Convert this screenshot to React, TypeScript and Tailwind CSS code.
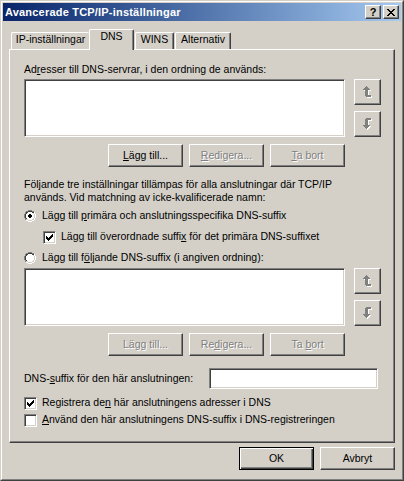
import React from 'react';

type PixMap = Record<string, string>;

function Pixels({ rows, colors, className }: { rows: string[]; colors: PixMap; className?: string }) {
  const w = Math.max(...rows.map((r) => r.length));
  const h = rows.length;
  const rects: React.ReactElement[] = [];
  rows.forEach((r, y) => {
    for (let x = 0; x < r.length; x++) {
      const c = colors[r[x]];
      if (c) rects.push(<rect key={`${x}-${y}`} x={x} y={y} width={1} height={1} fill={c} />);
    }
  });
  return (
    <svg width={w} height={h} viewBox={`0 0 ${w} ${h}`} shapeRendering="crispEdges" className={className}>
      {rects}
    </svg>
  );
}

function withShadow(mask: string[]): string[] {
  const h = mask.length + 1;
  const w = mask[0].length + 1;
  const out: string[] = [];
  for (let y = 0; y < h; y++) {
    let row = '';
    for (let x = 0; x < w; x++) {
      const on = mask[y]?.[x] === 'X';
      const sh = mask[y - 1]?.[x - 1] === 'X';
      row += on ? 'G' : sh ? 'W' : '.';
    }
    out.push(row);
  }
  return out;
}

const UP_MASK = [
  '...X.....',
  '..XXX....',
  '.XXXXX...',
  'XXXXXXX..',
  '..XXX....',
  '..XXX....',
  '..XXX....',
  '..XXX....',
  '..XXX....',
  '..XXXXXX.',
  '...XXXXX.',
];
const DOWN_MASK = [...UP_MASK].reverse();

const RADIO = [
  '....SSSS....',
  '..SSDDDDSS..',
  '.SDDWWWWDDH.',
  '.SDWWWWWWLH.',
  'SDWWWWWWWWLH',
  'SDWWWWWWWWLH',
  'SDWWWWWWWWLH',
  'SDWWWWWWWWLH',
  '.SDWWWWWWLH.',
  '.SLLWWWWLLH.',
  '..HHLLLLHH..',
  '....HHHH....',
];
const RADIO_ON = [
  '....SSSS....',
  '..SSDDDDSS..',
  '.SDDWWWWDDH.',
  '.SDWWWWWWLH.',
  'SDWWWKKWWWLH',
  'SDWWKKKKWWLH',
  'SDWWKKKKWWLH',
  'SDWWWKKWWWLH',
  '.SDWWWWWWLH.',
  '.SLLWWWWLLH.',
  '..HHLLLLHH..',
  '....HHHH....',
];
const RADIO_COLORS: PixMap = { S: '#808080', D: '#404040', W: '#ffffff', L: '#D4D0C8', H: '#ffffff', K: '#000000' };

const CHECK = [
  '......X',
  '.....XX',
  'X...XXX',
  'XX.XXX.',
  'XXXXX..',
  '.XXX...',
  '..X....',
];

const CLOSE_X = [
  'XX....XX',
  '.XX..XX.',
  '..XXXX..',
  '...XX...',
  '..XXXX..',
  '.XX..XX.',
  'XX....XX',
];

const raised =
  'border border-t-white border-l-white border-r-[#404040] border-b-[#404040] shadow-[inset_-1px_-1px_0_#808080]';
const sunken =
  'border border-t-[#808080] border-l-[#808080] border-r-white border-b-white shadow-[inset_1px_1px_0_#404040,inset_-1px_-1px_0_#D4D0C8]';
const disabledText = 'text-[#808080] [text-shadow:1px_1px_0_#ffffff]';

function U({ children }: { children: React.ReactNode }) {
  return <span className="underline underline-offset-[1px]">{children}</span>;
}

function Btn({ children, disabled, def }: { children: React.ReactNode; disabled?: boolean; def?: boolean }) {
  const frame = def
    ? 'border border-black shadow-[inset_1px_1px_0_#ffffff,inset_-1px_-1px_0_#404040,inset_-2px_-2px_0_#808080]'
    : raised;
  return (
    <div className={`h-[23px] w-[75px] flex items-center justify-center pb-[1px] ${frame} ${disabled ? disabledText : 'text-black'}`}>
      <span>{children}</span>
    </div>
  );
}

function ArrowBtn({ down }: { down?: boolean }) {
  return (
    <div className={`w-[27px] h-[26px] flex items-center justify-center ${raised}`}>
      <Pixels rows={withShadow(down ? DOWN_MASK : UP_MASK)} colors={{ G: '#808080', W: '#ffffff' }} />
    </div>
  );
}

function Radio({ on }: { on?: boolean }) {
  return <Pixels rows={on ? RADIO_ON : RADIO} colors={RADIO_COLORS} className="shrink-0 mt-[1px]" />;
}

function CheckBox({ on }: { on?: boolean }) {
  return (
    <div className={`w-[13px] h-[13px] bg-white shrink-0 mt-[1px] flex items-center justify-center ${sunken}`}>
      {on && <Pixels rows={CHECK} colors={{ X: '#000000' }} />}
    </div>
  );
}

function Tab({
  label,
  width,
  selected,
  noRight,
  ml,
}: {
  label: string;
  width: string;
  selected?: boolean;
  noRight?: boolean;
  ml?: string;
}) {
  const right = noRight
    ? ''
    : 'border-r border-r-[#404040] shadow-[inset_-1px_0_0_#808080]';
  return (
    <div
      className={`${width} ${ml ?? ''} ${selected ? 'h-[21px] -mb-[1px] relative z-10' : 'h-[17px]'} bg-[#D4D0C8] border-t border-l border-t-white border-l-white rounded-tl-[2px] rounded-tr-[2px] ${right} flex justify-center`}
    >
      <span>{label}</span>
    </div>
  );
}

export default function App() {
  return (
    <div className="w-[404px] h-[481px] bg-[#D4D0C8] border border-t-[#D4D0C8] border-l-[#D4D0C8] border-r-[#404040] border-b-[#404040] font-['Liberation_Sans',Arial,sans-serif] text-[10.5px] leading-[13px] tracking-normal text-black select-none">
      <div className="h-full border border-t-white border-l-white border-r-[#808080] border-b-[#808080] p-px flex flex-col">
        {/* Title bar */}
        <div className="h-[18px] shrink-0 bg-gradient-to-r from-[#0A246A] to-[#A6CAF0] flex items-center pl-[2px] pr-[2px]">
          <span className="text-white font-bold text-[11px] tracking-[0.2px] flex-1">Avancerade TCP/IP-inställningar</span>
          <div className="flex gap-[2px]">
            <div className={`w-[16px] h-[14px] bg-[#D4D0C8] flex items-center justify-center font-bold text-[11px] text-black leading-[12px] ${raised}`}>
              ?
            </div>
            <div className={`w-[16px] h-[14px] bg-[#D4D0C8] flex items-center justify-center ${raised}`}>
              <Pixels rows={CLOSE_X} colors={{ X: '#000000' }} />
            </div>
          </div>
        </div>

        {/* Body */}
        <div className="flex-1 px-[6px] pt-[8px] flex flex-col">
          {/* Tabs */}
          <div className="h-[20px] flex items-end pl-[2px]">
            <Tab label="IP-inställningar" width="w-[78px]" noRight />
            <Tab label="DNS" width="w-[45px]" selected />
            <Tab label="WINS" width="w-[39px]" ml="ml-[1px]" />
            <Tab label="Alternativ" width="w-[56px]" ml="ml-[1px]" />
          </div>

          {/* Panel */}
          <div className="h-[394px] border-t border-l border-t-white border-l-white border-r border-b border-r-[#404040] border-b-[#404040] shadow-[inset_-1px_-1px_0_#808080] pl-[14px] pr-[12px] pt-[13px] flex flex-col">
            <div>
              Ad<U>r</U>esser till DNS-servrar, i den ordning de används:
            </div>
            <div className="mt-[3px] flex">
              <div className={`w-[321px] h-[58px] bg-white ${sunken}`} />
              <div className="ml-[9px] flex flex-col gap-[6px]">
                <ArrowBtn />
                <ArrowBtn down />
              </div>
            </div>
            <div className="mt-[7px] flex gap-[6px] pl-[84px]">
              <Btn>
                <U>L</U>ägg till...
              </Btn>
              <Btn disabled>
                <U>R</U>edigera...
              </Btn>
              <Btn disabled>
                <U>T</U>a bort
              </Btn>
            </div>

            <div className="mt-[11px]">
              <div>Följande tre inställningar tillämpas för alla anslutningar där TCP/IP</div>
              <div>används. Vid matchning av icke-kvalificerade namn:</div>
            </div>

            <div className="mt-[5px] flex items-start gap-[6px]">
              <Radio on />
              <span>
                Lägg till <U>p</U>rimära och anslutningsspecifika DNS-suffix
              </span>
            </div>
            <div className="mt-[8px] ml-[19px] flex items-start gap-[5px]">
              <CheckBox on />
              <span>
                Lägg till överordnade suffi<U>x</U> för det primära DNS-suffixet
              </span>
            </div>
            <div className="mt-[7px] flex items-start gap-[6px]">
              <Radio />
              <span>
                Lägg till f<U>ö</U>ljande DNS-suffix (i angiven ordning):
              </span>
            </div>
            <div className="mt-[4px] flex">
              <div className={`w-[321px] h-[58px] bg-white ${sunken}`} />
              <div className="ml-[9px] flex flex-col gap-[6px]">
                <ArrowBtn />
                <ArrowBtn down />
              </div>
            </div>
            <div className="mt-[7px] flex gap-[6px] pl-[84px]">
              <Btn disabled>
                Lä<U>g</U>g till...
              </Btn>
              <Btn disabled>
                Re<U>d</U>igera...
              </Btn>
              <Btn disabled>
                Ta <U>b</U>ort
              </Btn>
            </div>

            <div className="mt-[12px] flex items-center justify-between pr-[4px]">
              <span>
                DNS-<U>s</U>uffix för den här anslutningen:
              </span>
              <div className={`w-[169px] h-[21px] bg-white ${sunken}`} />
            </div>
            <div className="mt-[7px] flex items-start gap-[5px]">
              <CheckBox on />
              <span>
                Registrera de<U>n</U> här anslutningens adresser i DNS
              </span>
            </div>
            <div className="mt-[3px] flex items-start gap-[5px]">
              <CheckBox />
              <span>
                <U>A</U>nvänd den här anslutningens DNS-suffix i DNS-registreringen
              </span>
            </div>
          </div>

          {/* Dialog buttons */}
          <div className="mt-[4px] flex justify-end gap-[6px]">
            <Btn def>OK</Btn>
            <Btn>Avbryt</Btn>
          </div>
        </div>
      </div>
    </div>
  );
}
